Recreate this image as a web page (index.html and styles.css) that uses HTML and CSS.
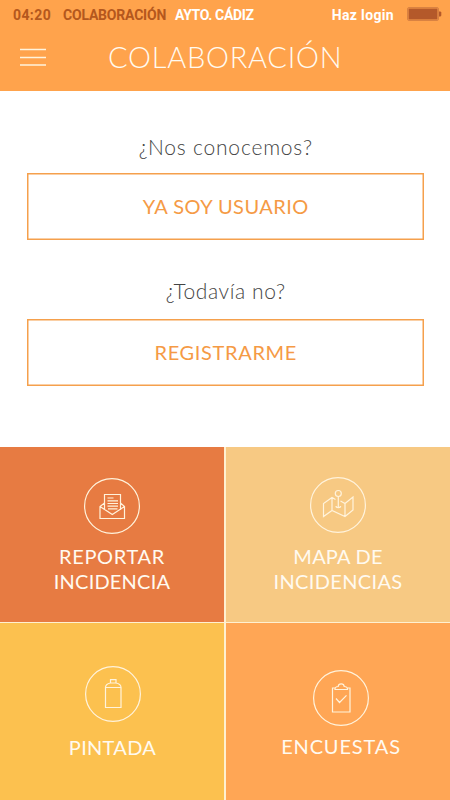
FILE: index.html
```html
<!DOCTYPE html>
<html lang="es">
<head>
<meta charset="utf-8">
<title>Colaboración</title>
<link rel="stylesheet" href="styles.css">
</head>
<body>
<header class="header">
  <div class="status">
    <span class="time">04:20</span>
    <span class="section">COLABORACIÓN</span>
    <span class="city">AYTO. CÁDIZ</span>
    <span class="login">Haz login</span>
    <svg class="battery" width="35" height="14" viewBox="0 0 35 14"><rect x=".5" y=".5" width="31" height="13" rx="1.5" fill="none" stroke="#d98242"/><rect x="1.500" y="1.500" width="29" height="11" fill="#b4592a"/><path d="M32 4.500h1.500l.8 1v3l-.8 1H32z" fill="#b4592a"/></svg>
  </div>
  <div class="bar">
    <svg class="menu" width="26" height="18" viewBox="0 0 26 18"><path d="M0 1.500h26M0 9.500h26M0 17h26" stroke="#fff3dc" stroke-width="1.300"/></svg>
    <h1 class="title">COLABORACIÓN</h1>
  </div>
</header>
<main class="access">
  <p class="question known">¿Nos conocemos?</p>
  <a class="button user">YA SOY USUARIO</a>
  <p class="question unknown">¿Todavía no?</p>
  <a class="button register">REGISTRARME</a>
</main>
<nav class="tiles">
  <a class="tile report">
    <svg class="icon" width="56" height="56" viewBox="0 0 56 56"><circle cx="28" cy="28" r="27.400"/><path d="M20.500 32V16.500h16V32M20.500 25L16 28.500v12h24.500v-12l-4-3.500M16 28.500l12.300 8 12.200-8M23.500 20h6M23.500 22.800h10.500M23.500 25.500h10.500M23.500 28.200h10.500M24 30.800h9.500"/></svg>
    <span class="label"><span class="reportar">REPORTAR</span><br><span class="incidencia">INCIDENCIA</span></span>
  </a>
  <a class="tile map">
    <svg class="icon" width="56" height="56" viewBox="0 0 56 56"><circle cx="28" cy="28" r="27.400"/><circle cx="28.300" cy="16.500" r="3"/><path d="M28.300 19.500V30.500M26 29c0 2.200 4.600 2.200 4.600 0M25.500 22.500L22 20.500l-8.500 6v13l8.500-6 13 6 8-6.500V20l-8 6.500-4.500-2.500M22 20.500v13M35 26.500v13"/></svg>
    <span class="label"><span class="mapa">MAPA DE</span><br><span class="incidencias">INCIDENCIAS</span></span>
  </a>
  <a class="tile paint">
    <svg class="icon" width="56" height="56" viewBox="0 0 56 56"><circle cx="28" cy="28" r="27.400"/><path d="M20.500 21.500h15.500v20H20.500zM20.500 21.500c0-3 2.500-4 5-4.500h5.500c2.500.5 5 1.500 5 4.500M25.500 17v-3.300h5.500V17"/></svg>
    <span class="label">PINTADA</span>
  </a>
  <a class="tile survey">
    <svg class="icon" width="56" height="56" viewBox="0 0 56 56"><circle cx="28" cy="28" r="27.400"/><path d="M22 18h-2.500v24H37V18h-2.500M22 19.500c0-2.200 1.200-3 3.200-3 .3-3.500 5.700-3.500 6 0 2 0 3.300.8 3.300 3zM23 28.500l3.500 4 7-7.200"/></svg>
    <span class="label">ENCUESTAS</span>
  </a>
</nav>
</body>
</html>
```
FILE: styles.css
```css
* { box-sizing: border-box; }
body {
  margin: 0;
  width: 450px;
  height: 800px;
  overflow: hidden;
  background: #fff;
  font-family: Lato, sans-serif;
  display: flex;
  flex-direction: column;
}
h1, p { margin: 0; font-weight: 300; }
.header { height: 90.500px; background: #ffa34c; flex: none; }
.status {
  height: 30px;
  padding: 0 8px 0 13px;
  display: flex;
  align-items: center;
  font: bold 14px/30px Roboto, sans-serif;
  color: #b4571d;
  white-space: nowrap;
}
.time { width: 50px; letter-spacing: .4px; }
.section { width: 112px; letter-spacing: -.2px; }
.city { color: #fff; letter-spacing: -.35px; }
.login { color: #fff; margin-left: auto; margin-right: 13px; letter-spacing: .35px; }
.battery { margin-top: -2px; }
.bar { display: flex; align-items: center; height: 54px; padding-left: 20px; }
.menu { margin-right: 62px; }
.title { font-size: 29px; font-weight: 300; line-height: 54px; letter-spacing: .75px; color: #fffaf0; }
.access {
  height: 356.500px;
  flex: none;
  padding: 41.500px 26px 0 26.500px;
  display: flex;
  flex-direction: column;
  text-align: center;
}
.question { font-size: 21px; line-height: 30px; letter-spacing: .8px; color: #444; }
.button {
  height: 67px;
  margin-top: 11px;
  border: 1px solid #f5a04c;
  box-shadow: inset 0 0 0 .5px #f5a04c;
  font-size: 20px;
  line-height: 65px;
  letter-spacing: .45px;
  color: #f59a45;
}
.known { padding-left: 1px; }
.user { padding-left: 1px; }
.unknown { margin-top: 35.500px; letter-spacing: .6px; padding-left: 1px; }
.register { margin-top: 13px; letter-spacing: .65px; padding-left: 1px; }
.tiles {
  flex: 1;
  display: grid;
  grid-template-columns: 224px 224px;
  grid-template-rows: 175px 177px;
  gap: 1px 2px;
  background: #fff0d0;
}
.tile {
  display: flex;
  flex-direction: column;
  align-items: center;
  padding-top: 31px;
  color: #fffaf0;
  font-size: 20px;
  line-height: 24.500px;
  text-align: center;
  white-space: nowrap;
}
.icon { fill: none; stroke: #fff3dc; stroke-width: 1.200; flex: none; }
.label { margin-top: 10px; }
.reportar { letter-spacing: .65px; }
.incidencia { letter-spacing: .2px; }
.mapa { letter-spacing: .2px; }
.incidencias { letter-spacing: .35px; }
.report { background: #e77b42; }
.map { background: #f7c983; padding-top: 30px; }
.map .label { margin-top: 11px; }
.paint { background: #fcc14f; padding-top: 43px; padding-left: 1px; letter-spacing: .3px; }
.paint .label { margin-top: 12.500px; }
.survey { background: #ffa655; padding-top: 47px; padding-left: 6px; letter-spacing: .85px; }
.survey .label { margin-top: 8px; }
```
